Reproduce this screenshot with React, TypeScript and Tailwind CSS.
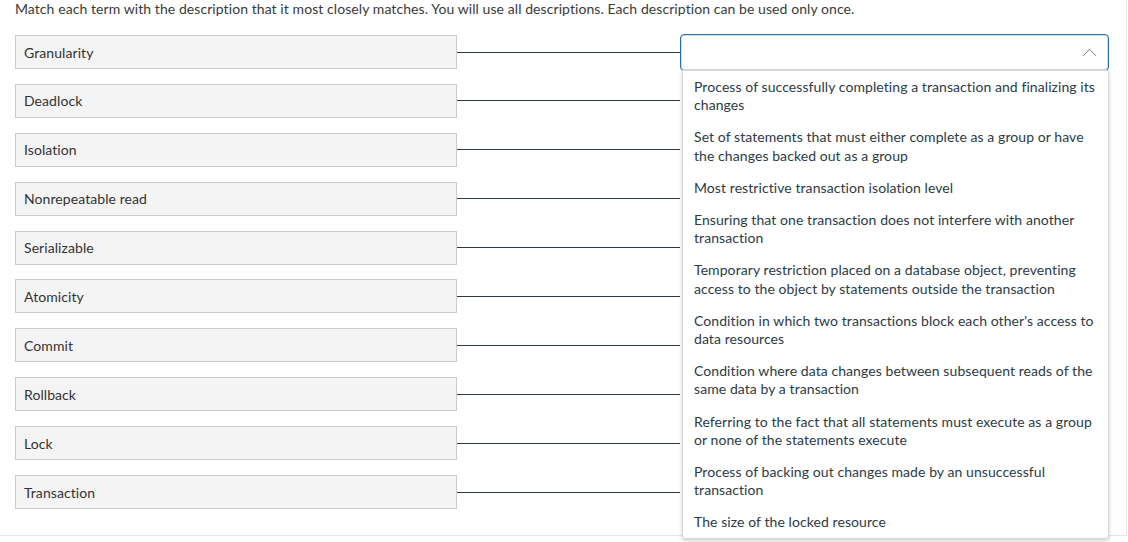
import { ChevronUp } from "lucide-react";

const terms = [
  "Granularity",
  "Deadlock",
  "Isolation",
  "Nonrepeatable read",
  "Serializable",
  "Atomicity",
  "Commit",
  "Rollback",
  "Lock",
  "Transaction",
];

const descriptions = [
  "Process of successfully completing a transaction and finalizing its changes",
  "Set of statements that must either complete as a group or have the changes backed out as a group",
  "Most restrictive transaction isolation level",
  "Ensuring that one transaction does not interfere with another transaction",
  "Temporary restriction placed on a database object, preventing access to the object by statements outside the transaction",
  "Condition in which two transactions block each other's access to data resources",
  "Condition where data changes between subsequent reads of the same data by a transaction",
  "Referring to the fact that all statements must execute as a group or none of the statements execute",
  "Process of backing out changes made by an unsuccessful transaction",
  "The size of the locked resource",
];

export default function App() {
  return (
    <div className="w-[1128px] h-[542px] bg-white overflow-hidden font-['Lato','Noto_Sans',sans-serif] text-[14px] tracking-[0.075px]">
      <div className="relative w-[1127px] h-[536px] border-r border-b border-[#e6e6e6] pl-[15px]">
        {/* Instructions */}
        <p className="leading-[18px] text-[#3a3a3a]">
          Match each term with the description that it most closely matches. You will use all descriptions. Each description can be used only once.
        </p>

        {/* Rows */}
        <div className="mt-[17px] flex flex-col gap-[14.9px]">
          {terms.map((term, i) => (
            <div key={term} className="flex items-center h-[34px]">
              <div className="w-[442px] h-[34px] flex items-center px-2 bg-[#f4f4f4] border border-[#c9cdd1] text-[#333333]">
                {term}
              </div>
              <div className="w-[223px] h-px bg-[#2d3b45]" />
              {i === 0 ? (
                <div className="w-[429px] h-[37px] flex items-center justify-end pr-[6px] bg-white border border-[#2b6ea8] rounded-[4px] shadow-[inset_0_0_0_1px_#d6dde3]">
                  <ChevronUp className="size-[25px] text-[#6b7780]" strokeWidth={0.95} />
                </div>
              ) : (
                <div className="w-[429px] h-[37px]" />
              )}
            </div>
          ))}
        </div>

        {/* Open dropdown list */}
        <ul className="absolute left-[682px] top-[70px] w-[427px] h-[469px] bg-white border border-[#d5d9dc] rounded-b-[3px] shadow-[0_2px_4px_rgba(0,0,0,0.18)] text-[#2d3b45]">
          {descriptions.map((d) => (
            <li key={d} className="px-[11px] py-[7px] leading-[18.2px]">
              {d}
            </li>
          ))}
        </ul>
      </div>
    </div>
  );
}
